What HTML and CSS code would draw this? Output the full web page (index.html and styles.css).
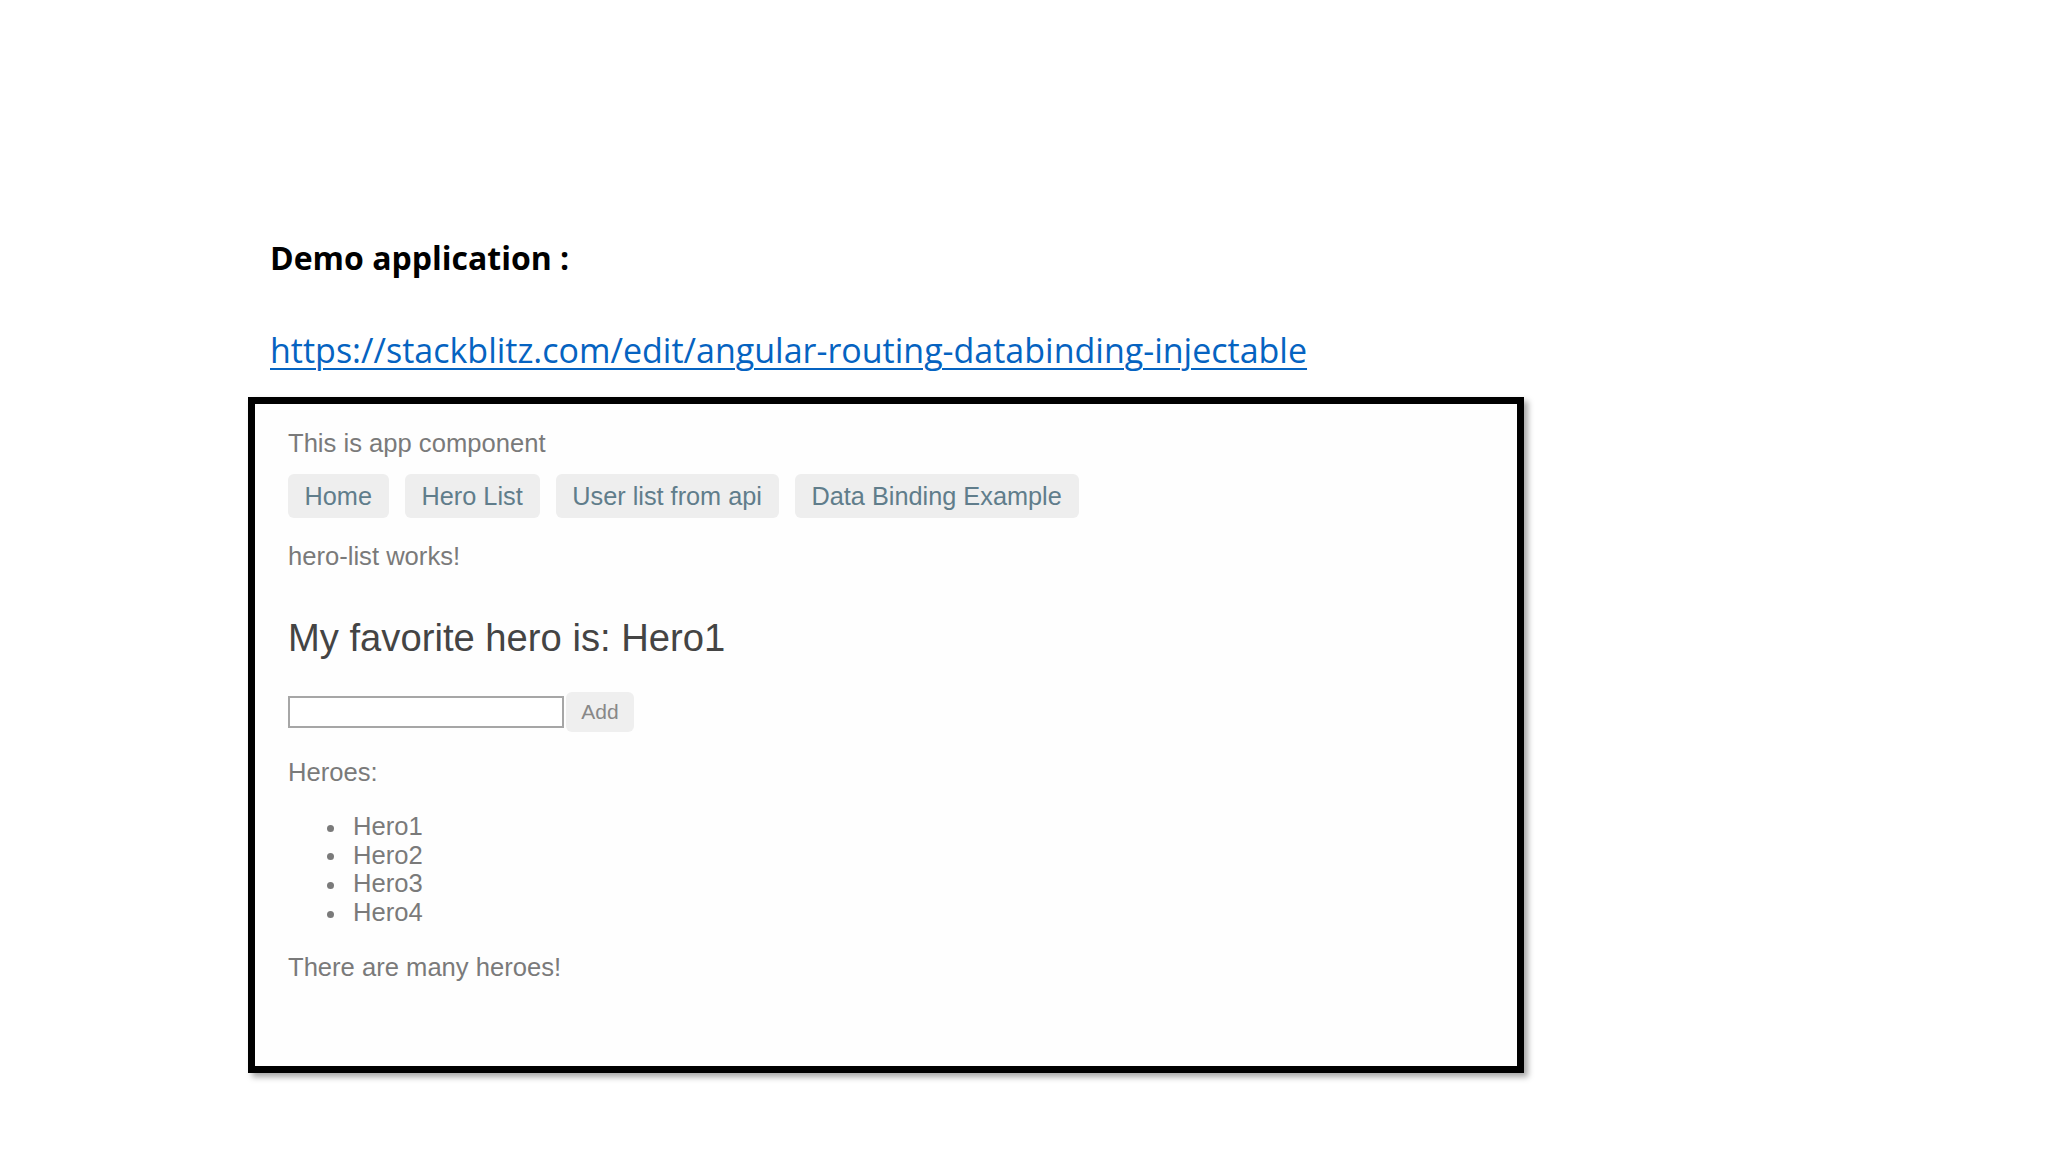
FILE: index.html
```html
<!DOCTYPE html>
<html lang="en">
<head>
    <meta charset="UTF-8">
    <meta name="viewport" content="width=device-width, initial-scale=1.0">
    <title>Demo application</title>
    <link rel="stylesheet" href="styles.css">
</head>
<body>
    <!-- Slide Start -->
    <div class="slide">
        <h1 class="slide-title">Demo application :</h1>
        <a class="slide-link" href="#">https://stackblitz.com/edit/angular-routing-databinding-injectable</a>

        <!-- App screenshot -->
        <div class="app-frame">
            <p class="app-line">This is app component</p>
            <nav class="app-nav">
                <a href="#">Home</a>
                <a href="#">Hero List</a>
                <a href="#">User list from api</a>
                <a href="#">Data Binding Example</a>
            </nav>
            <p class="app-line works">hero-list works!</p>
            <h2 class="fav-hero">My favorite hero is: Hero1</h2>
            <div class="add-row">
                <input type="text" class="hero-input">
                <button class="add-btn">Add</button>
            </div>
            <p class="app-line heroes-label">Heroes:</p>
            <ul class="hero-list">
                <li>Hero1</li>
                <li>Hero2</li>
                <li>Hero3</li>
                <li>Hero4</li>
            </ul>
            <p class="app-line">There are many heroes!</p>
        </div>
    </div>
    <!-- Slide End -->
</body>
</html>
```

FILE: styles.css
```css
* {
    box-sizing: border-box;
    margin: 0;
    padding: 0;
}

body {
    background-color: #ffffff;
    width: 2048px;
    height: 1152px;
    overflow: hidden;
}

.slide {
    padding: 236px 0 0 270px;
    font-family: "Open Sans", sans-serif;
}

.slide-title {
    font-size: 32px;
    font-weight: 700;
    line-height: 44px;
    color: #000000;
}

.slide-link {
    display: block;
    width: fit-content;
    margin-top: 47px;
    font-size: 34px;
    line-height: 46px;
    color: #0563c1;
    text-decoration: underline;
    text-decoration-thickness: 2px;
    text-underline-offset: 5px;
}

.app-frame {
    width: 1276px;
    height: 676px;
    margin: 24px 0 0 -22px;
    border: 7px solid #000000;
    background-color: #fefefe;
    box-shadow: 4px 4px 6px rgba(0, 0, 0, 0.35);
    padding: 25px 33px 0 33px;
    font-family: "Liberation Sans", Arial, sans-serif;
    font-size: 25.6px;
    color: #7a7a7a;
}

.app-line {
    line-height: 29px;
}

.app-nav {
    display: flex;
    gap: 16px;
    margin-top: 16px;
}

.app-nav a {
    padding: 7px 17px 7px 16.5px;
    font-size: 25.3px;
    line-height: 30px;
    background-color: #eeeeee;
    border-radius: 6px;
    color: #607d8b;
    text-decoration: none;
}

.works {
    margin-top: 24px;
}

.fav-hero {
    margin-top: 45px;
    font-size: 38.2px;
    font-weight: normal;
    line-height: 44px;
    color: #444444;
}

.add-row {
    display: flex;
    align-items: center;
    gap: 2px;
    margin-top: 32px;
}

.hero-input {
    width: 276px;
    height: 32px;
    border: 2px solid #a6a6a6;
    background-color: #ffffff;
    outline: none;
}

.add-btn {
    width: 68px;
    height: 40px;
    border: none;
    border-radius: 6px;
    background-color: #efefef;
    color: #888888;
    font-family: "Liberation Sans", Arial, sans-serif;
    font-size: 21px;
}

.heroes-label {
    margin-top: 26px;
}

.hero-list {
    margin: 25px 0 26px 0;
    padding-left: 39px;
    list-style: none;
    line-height: 28.7px;
}

.hero-list li::before {
    content: "";
    display: inline-block;
    width: 7px;
    height: 7px;
    margin-right: 19px;
    border-radius: 50%;
    background-color: #7a7a7a;
    vertical-align: middle;
}
```
